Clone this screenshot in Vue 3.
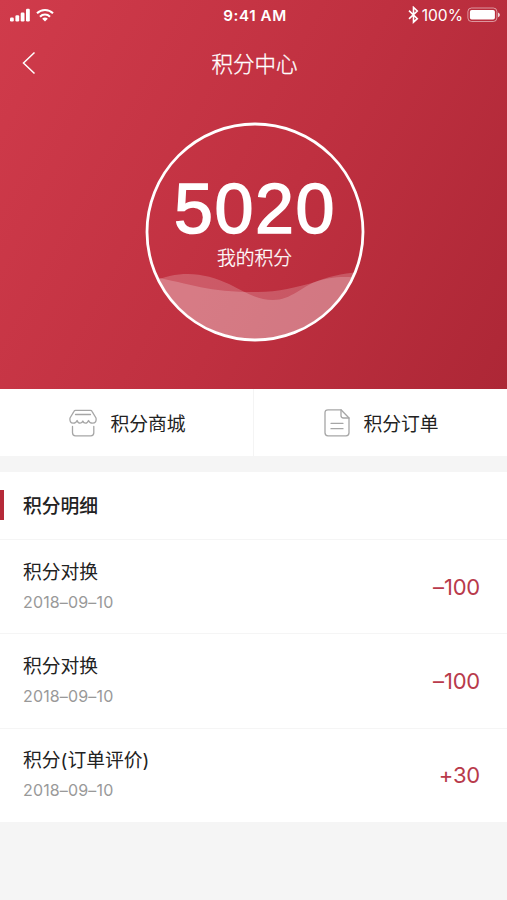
<script setup>
import { ref } from 'vue';

const points = ref(5020);

const records = ref([
    { id: 1, title: '积分对换', date: '2018–09–10', amount: '–100' },
    { id: 2, title: '积分对换', date: '2018–09–10', amount: '–100' },
    { id: 3, title: '积分(订单评价)', date: '2018–09–10', amount: '+30' },
]);
</script>

<template>
    <div class="page">
        <header class="hero">
            <div class="status">
                <div class="status-left">
                    <svg width="20" height="14" viewBox="0 0 20 14" fill="#fff">
                        <rect x="0" y="9.5" width="3.8" height="4" rx="1.2" />
                        <rect x="5.4" y="7.2" width="3.8" height="6.3" rx="1.2" />
                        <rect x="10.7" y="4.5" width="3.8" height="9" rx="1.2" />
                        <rect x="16" y="0.8" width="3.8" height="12.7" rx="1.2" />
                    </svg>
                    <svg width="18" height="14" viewBox="0 0 18 14" fill="none" stroke="#fff" stroke-width="2">
                        <path d="M1 5.3C5.4.9 12.6.9 17 5.3" />
                        <path d="M4 8.7c2.8-2.9 7.2-2.9 10 0" />
                        <path d="M9 13.5L6.2 10.7c1.600-1.500 4-1.500 5.600 0z" fill="#fff" stroke="none" />
                    </svg>
                </div>
                <span class="time">9:41 AM</span>
                <div class="status-right">
                    <svg width="11" height="18" viewBox="0 0 11 18" fill="none" stroke="#fff" stroke-width="1.6">
                        <path d="M1 4.7l8.3 8L5.5 16.2V1.4L9.3 5 1 12.9" />
                    </svg>
                    <span class="percent">100%</span>
                    <svg width="34" height="16" viewBox="0 0 34 16">
                        <rect x="0.9" y="1" width="29" height="13.5" rx="3.6" fill="none" stroke="#fff" stroke-opacity="0.5" />
                        <rect x="2.9" y="2.9" width="25" height="9.7" rx="1.8" fill="#fff" />
                        <path d="M31 5.5c2.5.8 2.5 3.9 0 4.700z" fill="#fff" fill-opacity="0.8" />
                    </svg>
                </div>
            </div>

            <div class="nav">
                <svg class="back" width="14" height="24" viewBox="0 0 14 24" fill="none" stroke="#fff" stroke-width="1.5">
                    <path d="M12.5 1.5L1.5 12l11 10.500" />
                </svg>
                <h1>积分中心</h1>
            </div>

            <div class="circle">
                <svg class="wave" viewBox="0 0 220 220">
                    <defs>
                        <clipPath id="inner">
                            <circle cx="110" cy="110" r="107" />
                        </clipPath>
                    </defs>
                    <g clip-path="url(#inner)" fill="#fff">
                        <path fill-opacity="0.2" d="M0 163C34 146 60 151 84 162C102 171 112 178 128 178C146 178 158 164 170 160C184 155 196 154 220 156V220H0z" />
                        <path fill-opacity="0.2" d="M0 153C48 162 60 170 112 170C134 170 152 165 167 161C186 154 196 151 220 150V220H0z" />
                    </g>
                    <circle cx="110" cy="110" r="108" fill="none" stroke="#fff" stroke-width="2.8" />
                </svg>
                <strong class="points">{{ points }}</strong>
                <span class="caption">我的积分</span>
            </div>
        </header>

        <nav class="tabs">
            <a class="tab">
                <svg width="28" height="28" viewBox="0 0 28 28" fill="none" stroke="#a6a6a6" stroke-width="1.3" stroke-linecap="round" stroke-linejoin="round">
                    <path d="M6.5 1.3h15q1 0 1.5 1L27 9q.8 5-3.5 5.2-3 0-4-2.7-1 2.700-3 2.700t-2.700-2.200q-.6 2.200-2.700 2.200t-3-2.700q-1 2.700-3.900 2.700Q.4 14 1 9L5 2.300q.5-1 1.500-1zM6.500 5.500h15" />
                    <path d="M3.5 17.500v6.300q0 3 3 3h15.300q3 0 3-3v-6.300" />
                </svg>
                <span>积分商城</span>
            </a>
            <a class="tab">
                <svg width="26" height="28" viewBox="0 0 26 28" fill="none" stroke="#a6a6a6" stroke-width="1.3" stroke-linecap="round" stroke-linejoin="round">
                    <path d="M17 .8H4q-3 0-3 3v20q0 3 3 3h18q3 0 3-3V9z" />
                    <path d="M17 .8V6.500Q17 9 19.500 9H25M7 14.300h12M7 19.700h12" />
                </svg>
                <span>积分订单</span>
            </a>
        </nav>

        <section class="detail">
            <h2>积分明细</h2>
            <ul>
                <li v-for="item in records" :key="item.id">
                    <div>
                        <p class="title">{{ item.title }}</p>
                        <p class="date">{{ item.date }}</p>
                    </div>
                    <span class="amount">{{ item.amount }}</span>
                </li>
            </ul>
        </section>
    </div>
</template>

<style>
body {
    margin: 0;
    background: #f5f5f5;
}
</style>

<style scoped>
.page {
    height: 900px;
    overflow: hidden;
    background: #f5f5f5;
    color: #222;
    font-family: Inter, "Noto Sans CJK SC", sans-serif;
}

h1, h2, p, ul {
    margin: 0;
    padding: 0;
}

svg {
    display: block;
    flex: none;
}

.hero {
    height: 389px;
    background: linear-gradient(118deg, #d03b4b 0%, #bf3040 55%, #ad2736 100%);
    color: #fff;
}

.status {
    display: grid;
    grid-template-columns: 1fr auto 1fr;
    align-items: center;
    height: 30px;
    padding: 0 6px 0 10px;
}

.status-left {
    display: flex;
    gap: 6px;
    margin-top: -1px;
}

.time {
    margin-left: -1px;
    font-size: 15.2px;
    font-weight: 600;
    letter-spacing: 0.6px;
}

.status-right {
    display: flex;
    align-items: center;
    justify-content: flex-end;
}

.percent {
    margin: 0 4px 0 3px;
    font-size: 15.6px;
}

.nav {
    position: relative;
    display: flex;
    align-items: center;
    justify-content: center;
    height: 64px;
    padding-left: 2px;
}

.back {
    position: absolute;
    left: 22px;
    top: 21px;
}

h1 {
    font-size: 21.5px;
    font-weight: 300;
    -webkit-text-stroke: 0.3px #fff;
}

.circle {
    position: relative;
    display: flex;
    flex-direction: column;
    align-items: center;
    width: 220px;
    height: 220px;
    margin: 27.5px 0 0 144.5px;
}

.wave {
    position: absolute;
    inset: 0;
}

.points {
    position: relative;
    margin-top: 47px;
    font: 400 70px/80px "Liberation Sans", sans-serif;
    letter-spacing: 1.6px;
    text-indent: 1px;
    -webkit-text-stroke: 1.5px #fff;
}

.caption {
    position: relative;
    margin-top: 1px;
    font-size: 18.8px;
    font-weight: 300;
    line-height: 18px;
    -webkit-text-stroke: 0.3px #fff;
}

.tabs {
    display: flex;
    height: 67px;
    background: #fff;
}

.tab {
    display: flex;
    flex: 1;
    align-items: center;
    justify-content: center;
    gap: 13px;
    padding-left: 2px;
    font-size: 18.8px;
}

.tab + .tab {
    border-left: 1px solid #f4f4f4;
}

.detail {
    margin-top: 16px;
    background: #fff;
}

h2 {
    display: flex;
    align-items: center;
    box-sizing: border-box;
    height: 67px;
    padding: 2px 0 0 23px;
    font-size: 18.8px;
    font-weight: 500;
    line-height: 26px;
    background: linear-gradient(#b52a39, #b52a39) 0 18px / 4px 30px no-repeat;
}

ul {
    list-style: none;
}

li {
    display: flex;
    align-items: center;
    justify-content: space-between;
    box-sizing: border-box;
    height: 94.3px;
    padding: 0 27px 0 23px;
    border-top: 1px solid #f5f5f5;
}

.title {
    padding-top: 1px;
    font-size: 18.8px;
    line-height: 30px;
}

.date {
    margin-top: -1px;
    color: #999;
    font-size: 16px;
    line-height: 30px;
    letter-spacing: 0.15px;
}

.amount {
    color: #b83a4b;
    font-size: 22px;
    letter-spacing: -0.2px;
}
</style>
